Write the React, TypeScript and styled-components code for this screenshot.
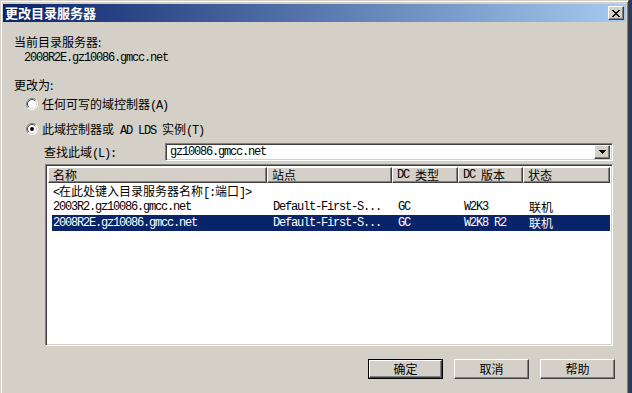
import React from "react";
import styled, { createGlobalStyle } from "styled-components";

const Global = createGlobalStyle`
  html, body { margin: 0; padding: 0; }
  body {
    width: 632px; height: 393px; overflow: hidden;
    background: #1f3c6e;
    font-family: "Noto Sans CJK SC", "Liberation Sans", sans-serif;
    font-size: 12px; color: #000;
  }
`;

const Desktop = styled.div`
  width: 632px;
  height: 393px;
  display: flex;
  background: #1f3c6e;
`;

const Window = styled.div`
  width: 629px;
  height: 393px;
  box-sizing: border-box;
  background: #d4d0c8;
  border-top: 1px solid #d4d0c8;
  border-left: 1px solid #d4d0c8;
  border-right: 1px solid #404040;
  box-shadow: inset 1px 1px 0 #ffffff, inset -1px 0 0 #808080;
  padding: 3px 2px 0 2px;
  display: flex;
  flex-direction: column;
`;

const TitleBar = styled.div`
  height: 18px;
  flex: none;
  display: flex;
  align-items: center;
  justify-content: space-between;
  padding: 0 2px 0 2px;
  background: linear-gradient(to right, #0a246a, #a6caf0);
`;

const TitleText = styled.span`
  color: #fff;
  font-weight: bold;
  font-size: 13px;
  line-height: 18px;
`;

const Raised = styled.div`
  box-sizing: border-box;
  background: #d4d0c8;
  border-top: 1px solid #ffffff;
  border-left: 1px solid #ffffff;
  border-right: 1px solid #404040;
  border-bottom: 1px solid #404040;
  box-shadow: inset -1px -1px 0 #808080;
  display: flex;
  align-items: center;
  justify-content: center;
`;

const CloseButton = styled(Raised)`
  width: 16px;
  height: 14px;
`;

const Body = styled.div`
  display: flex;
  flex-direction: column;
  padding: 0 11px 0 11px;
`;

const Line = styled.div<{ $top: number; $indent?: number }>`
  height: 16px;
  line-height: 16px;
  margin-top: ${(p) => p.$top}px;
  margin-left: ${(p) => p.$indent ?? 0}px;
  white-space: nowrap;
  display: flex;
  align-items: center;
`;

const Mono = styled.span`
  font-family: "Liberation Mono", monospace;
  font-size: 12px;
  letter-spacing: -1.2px;
  line-height: 14px;
`;

const RadioRow = styled(Line)`
  gap: 4px;
`;

const FindRow = styled.div`
  margin-top: 6px;
  margin-left: 30px;
  margin-right: 2px;
  display: flex;
  align-items: center;
  height: 18px;
`;

const FindLabel = styled.span`
  width: 121px;
  flex: none;
  line-height: 16px;
`;

const Sunken = styled.div`
  box-sizing: border-box;
  border-top: 1px solid #808080;
  border-left: 1px solid #808080;
  border-right: 1px solid #ffffff;
  border-bottom: 1px solid #ffffff;
  box-shadow: inset 1px 1px 0 #404040, inset -1px -1px 0 #d4d0c8;
  background: #fff;
`;

const Combo = styled(Sunken)`
  flex: 1;
  height: 18px;
  display: flex;
  align-items: center;
  justify-content: space-between;
  padding: 2px 2px 2px 4px;
`;

const ComboButton = styled(Raised)`
  width: 16px;
  height: 14px;
`;

const List = styled(Sunken)`
  margin-top: 3px;
  margin-left: 31px;
  margin-right: 2px;
  height: 182px;
  padding: 2px;
  display: flex;
  flex-direction: column;
  overflow: hidden;
`;

const HeaderRow = styled.div`
  display: grid;
  grid-template-columns: 219px 125px 66px 65px 1fr;
  height: 16px;
  flex: none;
`;

const HeaderCell = styled.div`
  box-sizing: border-box;
  background: #d4d0c8;
  border-top: 1px solid #ffffff;
  border-left: 1px solid #ffffff;
  border-right: 1px solid #404040;
  border-bottom: 1px solid #404040;
  box-shadow: inset -1px -1px 0 #808080;
  padding-left: 4px;
  line-height: 14px;
  white-space: nowrap;
  display: flex;
  align-items: center;
`;

const Row = styled.div<{ $selected?: boolean }>`
  display: grid;
  grid-template-columns: 215px 125px 66px 65px 1fr;
  height: 16px;
  line-height: 14px;
  margin-left: 4px;
  background: ${(p) => (p.$selected ? "#0a246a" : "transparent")};
  color: ${(p) => (p.$selected ? "#fff" : "#000")};
  white-space: nowrap;
`;

const Cell = styled.div<{ $first?: boolean }>`
  box-sizing: border-box;
  padding-left: ${(p) => (p.$first ? 1 : 6)}px;
  height: 16px;
  display: flex;
  align-items: center;
`;

const WideCell = styled(Cell)`
  grid-column: 1 / -1;
  padding-top: 2px;
`;

const ButtonBar = styled.div`
  margin-top: 13px;
  display: flex;
  justify-content: flex-end;
  gap: 11px;
`;

const PushButton = styled(Raised)`
  width: 75px;
  height: 20px;
  font-size: 12px;
  line-height: 16px;
`;

const DefaultWrap = styled.div`
  border: 1px solid #000;
  width: 75px;
  height: 20px;
  box-sizing: border-box;
  display: flex;
`;

const DefaultInner = styled(Raised)`
  flex: 1;
  line-height: 16px;
`;

const Radio = ({ checked }: { checked?: boolean }) => (
  <svg width="12" height="12" viewBox="0 0 12 12">
    <circle cx="6" cy="6" r="5.5" fill="#fff" />
    <path d="M2.1 9.9 A5.5 5.5 0 0 1 9.9 2.1" stroke="#808080" strokeWidth="1" fill="none" />
    <path d="M9.9 2.1 A5.5 5.5 0 0 1 2.1 9.9" stroke="#ffffff" strokeWidth="1" fill="none" />
    <path d="M2.8 9.2 A4.5 4.5 0 0 1 9.2 2.8" stroke="#404040" strokeWidth="1" fill="none" />
    <path d="M9.2 2.8 A4.5 4.5 0 0 1 2.8 9.2" stroke="#d4d0c8" strokeWidth="1" fill="none" />
    {checked && <circle cx="6" cy="6" r="2" fill="#000" />}
  </svg>
);

const CloseGlyph = () => (
  <svg width="8" height="7" viewBox="0 0 8 7" shapeRendering="crispEdges">
    <path
      d="M0 0h2v1h-2z M6 0h2v1h-2z M1 1h2v1h-2z M5 1h2v1h-2z M2 2h4v1h-4z M3 3h2v1h-2z M2 4h4v1h-4z M1 5h2v1h-2z M5 5h2v1h-2z M0 6h2v1h-2z M6 6h2v1h-2z"
      fill="#000"
    />
  </svg>
);

const DownGlyph = () => (
  <svg width="7" height="4" viewBox="0 0 7 4" shapeRendering="crispEdges">
    <path d="M0 0h7v1h-7z M1 1h5v1h-5z M2 2h3v1h-3z M3 3h1v1h-1z" fill="#000" />
  </svg>
);

type Server = { name: string; site: string; type: string; version: string; status: string; selected?: boolean };

const servers: Server[] = [
  { name: "2003R2.gz10086.gmcc.net", site: "Default-First-S...", type: "GC", version: "W2K3", status: "联机" },
  { name: "2008R2E.gz10086.gmcc.net", site: "Default-First-S...", type: "GC", version: "W2K8 R2", status: "联机", selected: true },
];

export default function App() {
  return (
    <>
      <Global />
      <Desktop>
        <Window>
          <TitleBar>
            <TitleText>更改目录服务器</TitleText>
            <CloseButton>
              <CloseGlyph />
            </CloseButton>
          </TitleBar>
          <Body>
            <Line $top={12}>当前目录服务器:</Line>
            <Line $top={0} $indent={10}>
              <Mono>2008R2E.gz10086.gmcc.net</Mono>
            </Line>
            <Line $top={11}>更改为:</Line>
            <RadioRow $top={3} $indent={12}>
              <Radio />
              <span>
                任何可写的域控制器<Mono>(A)</Mono>
              </span>
            </RadioRow>
            <RadioRow $top={9} $indent={12}>
              <Radio checked />
              <span>
                此域控制器或<Mono>&nbsp;AD LDS&nbsp;</Mono>实例<Mono>(T)</Mono>
              </span>
            </RadioRow>
            <FindRow>
              <FindLabel>
                查找此域<Mono>(L):</Mono>
              </FindLabel>
              <Combo>
                <Mono>gz10086.gmcc.net</Mono>
                <ComboButton>
                  <DownGlyph />
                </ComboButton>
              </Combo>
            </FindRow>
            <List>
              <HeaderRow>
                <HeaderCell>名称</HeaderCell>
                <HeaderCell>站点</HeaderCell>
                <HeaderCell>
                  <Mono>DC&nbsp;</Mono>类型
                </HeaderCell>
                <HeaderCell>
                  <Mono>DC&nbsp;</Mono>版本
                </HeaderCell>
                <HeaderCell>状态</HeaderCell>
              </HeaderRow>
              <Row>
                <WideCell $first>
                  <span>
                    <Mono>&lt;</Mono>在此处键入目录服务器名称<Mono>[:</Mono>端口<Mono>]&gt;</Mono>
                  </span>
                </WideCell>
              </Row>
              {servers.map((s) => (
                <Row key={s.name} $selected={s.selected}>
                  <Cell $first>
                    <Mono>{s.name}</Mono>
                  </Cell>
                  <Cell>
                    <Mono>{s.site}</Mono>
                  </Cell>
                  <Cell>
                    <Mono>{s.type}</Mono>
                  </Cell>
                  <Cell>
                    <Mono>{s.version}</Mono>
                  </Cell>
                  <Cell>{s.status}</Cell>
                </Row>
              ))}
            </List>
            <ButtonBar>
              <DefaultWrap>
                <DefaultInner>确定</DefaultInner>
              </DefaultWrap>
              <PushButton>取消</PushButton>
              <PushButton>帮助</PushButton>
            </ButtonBar>
          </Body>
        </Window>
      </Desktop>
    </>
  );
}
